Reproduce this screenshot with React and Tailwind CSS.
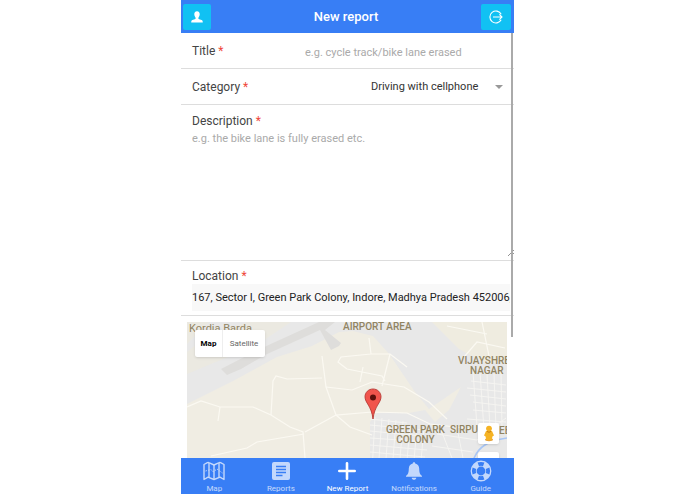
import React from "react";

function PersonIcon() {
  return (
    <svg viewBox="0 0 12 12" className="h-3 w-3" fill="currentColor" aria-hidden="true">
      <path d="M6 0.2C7.9 0.2 8.8 1.5 8.7 3.4C8.6 4.9 7.9 5.8 7.5 6.5C7.2 7.5 7.4 8 8.2 8.3L10.6 9C11.5 9.4 11.8 10.2 11.8 11.4H0.2C0.2 10.2 0.5 9.4 1.4 9L3.8 8.3C4.6 8 4.8 7.5 4.5 6.5C4.1 5.8 3.4 4.9 3.3 3.4C3.2 1.5 4.1 0.2 6 0.2Z" />
    </svg>
  );
}

function LogoutIcon() {
  return (
    <svg viewBox="0 0 14 14" className="h-3.5 w-3.5" fill="none" stroke="currentColor" strokeWidth="1.1" aria-hidden="true">
      <path d="M12.2 4.2A6 6 0 1 0 12.2 9.8" />
      <path d="M4 7H13M10.4 4.4L13 7L10.4 9.6" />
    </svg>
  );
}

function MapIcon() {
  return (
    <svg viewBox="0 0 22 20" className="h-5 w-[22px]" fill="none" stroke="currentColor" strokeWidth="1.4" aria-hidden="true">
      <path d="M1 3.5L4.4 1.6Q5.4 1.2 6.4 1.8L11 4L15.6 1.8Q16.6 1.2 17.6 1.6L21 3.5V18.5L17 16.2L11 18.5L5 16.2L1 18.5Z" strokeLinejoin="round" />
      <path d="M6 2V16M11 4V18M16 2V16" />
      <path d="M2.5 10L8 8.5L10 11L14 8L19.5 12" strokeWidth="1" strokeDasharray="1.4 1.4" />
    </svg>
  );
}

function ReportsIcon() {
  return (
    <svg viewBox="0 0 18 18" className="h-[18px] w-[18px]" aria-hidden="true">
      <rect width="18" height="18" rx="2" fill="currentColor" />
      <path d="M4 4.5H14M4 7.5H14M4 10.5H14M4 13.5H10.5" stroke="#387ef5" strokeWidth="1.4" />
    </svg>
  );
}

function PlusIcon() {
  return (
    <svg viewBox="0 0 18 18" className="h-[18px] w-[18px]" fill="none" stroke="currentColor" strokeWidth="2.6" strokeLinecap="round" aria-hidden="true">
      <path d="M9 1.3V16.7M1.3 9H16.7" />
    </svg>
  );
}

function BellIcon() {
  return (
    <svg viewBox="0 0 18 18" className="h-[18px] w-[18px]" fill="currentColor" aria-hidden="true">
      <path d="M9 0.2C9.8 0.2 10.2 0.7 10.2 1.4C12.8 2 14.1 3.8 14.2 6.5C14.3 10.8 14.9 12.2 17 14V14.8H1V14C3.1 12.2 3.7 10.8 3.8 6.5C3.9 3.8 5.2 2 7.8 1.4C7.8 0.7 8.2 0.2 9 0.2Z" />
      <path d="M6.7 15.7H11.3C11.1 17 10.2 17.8 9 17.8S6.9 17 6.7 15.7Z" />
    </svg>
  );
}

function GuideIcon() {
  return (
    <svg viewBox="0 0 22 22" className="h-[22px] w-[22px]" fill="none" aria-hidden="true">
      <circle cx="11" cy="11" r="7.4" stroke="currentColor" strokeWidth="6" />
      <path d="M7.6 2.6A9.2 9.2 0 0 1 14.4 2.6L13 6.2A5.2 5.2 0 0 0 9 6.2ZM19.4 7.6A9.2 9.2 0 0 1 19.4 14.4L15.8 13A5.2 5.2 0 0 0 15.8 9ZM14.4 19.4A9.2 9.2 0 0 1 7.6 19.4L9 15.8A5.2 5.2 0 0 0 13 15.8ZM2.6 14.4A9.2 9.2 0 0 1 2.6 7.6L6.2 9A5.2 5.2 0 0 0 6.2 13Z" fill="#387ef5" />
    </svg>
  );
}

function MapDrawing() {
  return (
    <svg viewBox="0 0 320 200" preserveAspectRatio="xMinYMin slice" className="absolute inset-0 h-full w-full" aria-hidden="true">
      <rect width="320" height="200" fill="#e8e8e8" />
      <path d="M0 82L46 59L90 35L125 24L152 10L166 9L186 14L203 33L213 48L228 70L242 87L258 76L274 65L262 88L248 100L238 88L222 91H190L183 100V200H0Z" fill="#f0ede3" />
      <path d="M0 0H22L0 22ZM0 30L10 22L60 0H104L65 26L36 37L0 52Z" fill="#ebe9e1" />
      <path d="M245 0H320V38L300 42L272 27Z" fill="#efece0" />
      <path d="M34 47L75 26L132 0H148L138 8L154 21L152 24L144 28L133 8L78 33L54 47L40 53Z" fill="#dedddb" />
      <g fill="none" stroke="#fbf9f2" strokeWidth="1.2">
        <path d="M0 85L14 79L33 85H66L84 93L103 105L116 110L118 136" />
        <path d="M33 85L31 99M84 93L86 59L89 54L100 57L135 56" />
        <path d="M135 34L139 65L149 93L185 90L220 91L243 102L285 107" />
        <path d="M118 110L149 93M24 134L60 126L70 120L117 112M149 93L163 105L185 113" />
        <path d="M139 65L165 68L185 60L217 65L242 80L260 97M173 60L176 45M160 47L151 40L154 35L184 32L203 32L220 45M160 47L195 54L198 59M203 32L195 64M184 32L182 16" />
        <path d="M277 35L290 20L318 26M295 0L302 34M260 4L300 12" />
      </g>
      <g fill="none" stroke="#f6f5f2" strokeWidth="0.9">
        <path d="M183 97L220 101M183 103L248 109M183 109L236 114M183 116L242 120M183 123L240 128M183 130L238 135M188 95L185 150M195 96L191 150M202 97L198 150M209 98L205 150M216 99L212 150M223 104L219 150M230 104L226 150M237 106L233 150" />
        <path d="M284 59L319 63M280 66L319 70M283 73L319 77M286 80L319 84M286 88L319 91M280 97L319 100M286 50L290 104M293 50L297 108M300 52L303 106M307 52L309 108M314 50L315 108M250 112L290 118L319 96M245 124L286 130M254 108L265 136M270 106L276 136" />
      </g>
      <path d="M287 136C292 125 300 119 320 116" fill="none" stroke="#a9c6f5" strokeWidth="1.6" />
    </svg>
  );
}

function Pin() {
  return (
    <svg viewBox="0 0 18 32" className="absolute left-[177px] top-[66px] h-8 w-[18px]" aria-label="Report location">
      <path d="M9 1C4.5 1 1 4.4 1 8.8C1 15 7.5 17.6 9 31C10.5 17.6 17 15 17 8.8C17 4.4 13.5 1 9 1Z" fill="#f1544c" stroke="#b63a35" strokeWidth="0.9" />
      <circle cx="9" cy="9.5" r="3" fill="#5d100c" />
    </svg>
  );
}

function Pegman() {
  return (
    <svg viewBox="0 0 12 17" className="h-[17px] w-3" aria-hidden="true">
      <ellipse cx="6" cy="14.6" rx="4" ry="1.6" fill="#e8a33a" />
      <path d="M3 6H9L11 10.5L9.6 11.3L8.5 15H3.5L2.4 11.3L1 10.5Z" fill="#f5b324" />
      <circle cx="6" cy="3.6" r="2.9" fill="#f5b324" />
      <path d="M4 6.4Q6 8.2 8 6.4" stroke="#c77e19" strokeWidth="1" fill="none" />
    </svg>
  );
}

function Required() {
  return <span className="text-[#ef473a]">*</span>;
}

const tabs = [
  { name: "Map", Icon: MapIcon },
  { name: "Reports", Icon: ReportsIcon },
  { name: "New Report", Icon: PlusIcon, active: true },
  { name: "Notifications", Icon: BellIcon },
  { name: "Guide", Icon: GuideIcon },
];

const mapLabel = "absolute whitespace-nowrap text-center text-[10px] leading-[10px] font-medium text-[#918462]";

export default function App() {
  return (
    <div className="min-h-screen bg-white">
      <div className="mx-auto flex h-screen max-w-[333px] flex-col font-['Roboto',sans-serif] text-[12px] text-[#444]">
        <header className="flex h-[33px] shrink-0 items-center justify-between bg-[#387ef5] pl-0.5 pr-[3px] text-white">
          <button type="button" aria-label="Profile" className="flex h-[26px] w-7 items-center justify-center rounded-xs bg-[#11c1f3]">
            <PersonIcon />
          </button>
          <h1 className="text-[13px] font-medium">New report</h1>
          <button type="button" aria-label="Log out" className="flex h-[26px] w-[30px] items-center justify-center rounded-xs bg-[#11c1f3]">
            <LogoutIcon />
          </button>
        </header>

        <main className="relative min-h-0 flex-1 overflow-hidden">
          <form>
            <div className="flex h-9 items-center border-b border-[#ddd] pl-[11px]">
              <label htmlFor="title" className="w-[113px] shrink-0">
                Title <Required />
              </label>
              <input id="title" type="text" placeholder="e.g. cycle track/bike lane erased" className="h-full min-w-0 flex-1 pt-1 text-[11px] outline-none placeholder:text-[#aaa]" />
            </div>

            <div className="flex h-9 items-center border-b border-[#ddd] pl-[11px] pr-[11px]">
              <label htmlFor="category" className="flex-1">
                Category <Required />
              </label>
              <select id="category" className="mr-4 h-full appearance-none bg-white pt-0.5 text-[11px] text-[#333] outline-none">
                <option>Driving with cellphone</option>
              </select>
              <svg viewBox="0 0 8 4" className="pointer-events-none h-1 w-2" fill="#999" aria-hidden="true">
                <path d="M0 0H8L4 4Z" />
              </svg>
            </div>

            <div className="flex h-[156px] flex-col border-b border-[#ddd] pl-[11px] pt-2">
              <label htmlFor="description" className="leading-4">
                Description <Required />
              </label>
              <div className="relative flex-1">
                <textarea id="description" placeholder="e.g. the bike lane is fully erased etc." className="block h-full w-full resize-none pt-0.5 text-[11px] leading-4 outline-none placeholder:text-[#aaa]" />
                <svg viewBox="0 0 6 6" className="absolute bottom-1 right-0 h-1.5 w-1.5" stroke="#777" strokeWidth="0.8" aria-hidden="true">
                  <path d="M0 6L6 0M3 6L6 3" />
                </svg>
              </div>
            </div>

            <div className="border-b border-[#ddd] pb-1 pl-[11px] pr-1 pt-[7px]">
              <label htmlFor="location" className="block leading-4">
                Location <Required />
              </label>
              <input id="location" type="text" defaultValue="167, Sector I, Green Park Colony, Indore, Madhya Pradesh 452006, India" className="block h-[27px] w-full bg-[#f8f8f8] text-[11px] text-[#222] outline-none" />
            </div>
          </form>

          <section aria-label="Map" className="relative ml-1.5 mr-[7px] mt-1.5 h-[200px] overflow-hidden">
            <MapDrawing />
            <span className="absolute left-0.5 top-px whitespace-nowrap text-[11px] leading-3 text-[#918462]">Kordia Barda</span>
            <span className={`${mapLabel} left-[156px] top-0`}>AIRPORT AREA</span>
            <span className={`${mapLabel} left-[271px] top-[34px]`}>VIJAYSHREE<br />NAGAR</span>
            <span className={`${mapLabel} left-[199px] top-[103px]`}>GREEN PARK<br />COLONY</span>
            <span className={`${mapLabel} left-[263px] top-[103px]`}>SIRPUR</span>
            <span className={`${mapLabel} left-[312px] top-[104px]`}>EE</span>
            <Pin />
            <div className="absolute left-2 top-2 flex h-[27px] rounded-xs bg-white text-[8px] shadow-sm">
              <button type="button" className="w-7 border-r border-[#eee] font-bold text-black">Map</button>
              <button type="button" className="w-[42px] text-[#666]">Satellite</button>
            </div>
            <button type="button" aria-label="Street View" className="absolute left-[291px] top-[101px] flex h-[21px] w-[21px] items-center justify-center rounded-xs bg-white shadow-sm">
              <Pegman />
            </button>
            <button type="button" aria-label="Zoom in" className="absolute left-[291px] top-[130px] h-[21px] w-[21px] rounded-xs bg-white shadow-sm" />
          </section>

          <div className="absolute right-px top-0 h-[304px] w-0.5 bg-[#aaa]" />
        </main>

        <nav className="grid h-9 shrink-0 grid-cols-5 bg-[#387ef5] text-white">
          {tabs.map(({ name, Icon, active }) => (
            <a key={name} href="#" aria-current={active ? "page" : undefined} className={`flex flex-col items-center text-[8px] leading-[11px] ${active ? "opacity-100" : "opacity-70"}`}>
              <span className="flex h-[25px] items-center">
                <Icon />
              </span>
              <span className="whitespace-nowrap">{name}</span>
            </a>
          ))}
        </nav>
      </div>
    </div>
  );
}
